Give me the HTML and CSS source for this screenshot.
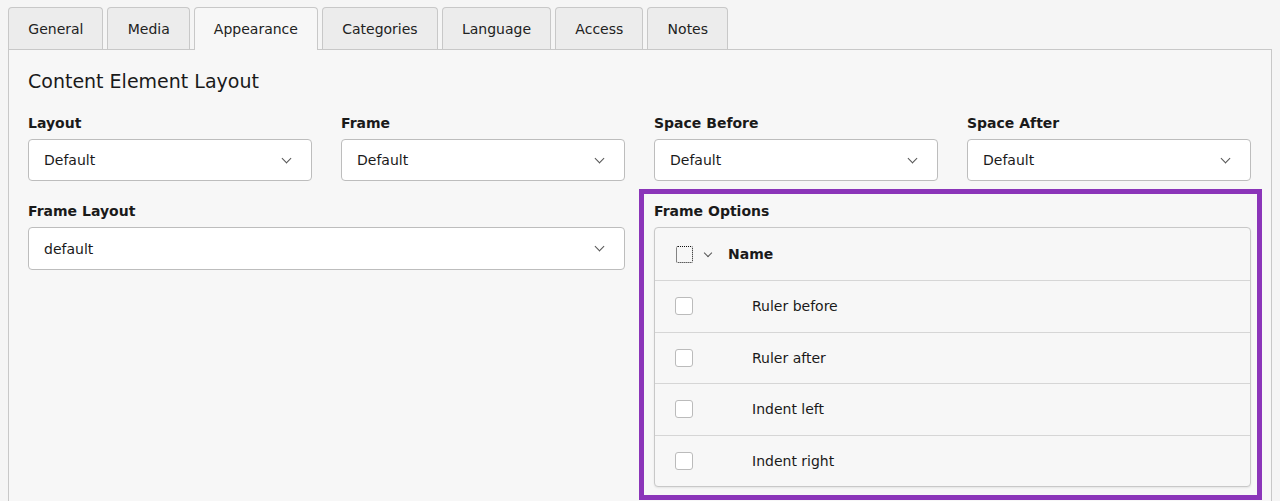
FILE: index.html
```html
<!DOCTYPE html>
<html lang="en">
<head>
  <meta charset="UTF-8">
  <title>Appearance</title>
  <link rel="stylesheet" href="styles.css">
</head>
<body>
  <ul class="tabs">
    <li class="tab">General</li>
    <li class="tab">Media</li>
    <li class="tab active">Appearance</li>
    <li class="tab">Categories</li>
    <li class="tab">Language</li>
    <li class="tab">Access</li>
    <li class="tab">Notes</li>
  </ul>

  <div class="panel">
    <h2 class="section-title">Content Element Layout</h2>

    <div class="fields">
      <div class="field">
        <label class="field-label">Layout</label>
        <div class="select">Default <span class="chevron"></span></div>
      </div>
      <div class="field">
        <label class="field-label">Frame</label>
        <div class="select">Default <span class="chevron"></span></div>
      </div>
      <div class="field">
        <label class="field-label">Space Before</label>
        <div class="select">Default <span class="chevron"></span></div>
      </div>
      <div class="field">
        <label class="field-label">Space After</label>
        <div class="select">Default <span class="chevron"></span></div>
      </div>

      <div class="field wide">
        <label class="field-label">Frame Layout</label>
        <div class="select">default <span class="chevron"></span></div>
      </div>

      <div class="field wide highlighted">
        <label class="field-label">Frame Options</label>
        <div class="options">
          <div class="option-head">
            <span class="check dotted"></span>
            <span class="chevron small"></span>
            <span class="head-name">Name</span>
          </div>
          <div class="option-row"><span class="check"></span><span class="option-name">Ruler before</span></div>
          <div class="option-row"><span class="check"></span><span class="option-name">Ruler after</span></div>
          <div class="option-row"><span class="check"></span><span class="option-name">Indent left</span></div>
          <div class="option-row"><span class="check"></span><span class="option-name">Indent right</span></div>
        </div>
      </div>
    </div>
  </div>
</body>
</html>
```

FILE: styles.css
```css
:root {
  --page-bg: #f5f5f5;
  --panel-bg: #f7f7f7;
  --tab-bg: #ececec;
  --border: #c8c8c8;
  --input-border: #bdbdbd;
  --text: #1a1a1a;
  --highlight: #8b35b9;
}

body {
  margin: 0;
  padding: 7px 8px 0;
  background-color: var(--page-bg);
  color: var(--text);
  font-family: "DejaVu Sans", Verdana, sans-serif;
  font-size: 14px;
  overflow: hidden;
}

.tabs {
  display: flex;
  gap: 4px;
  list-style: none;
  margin: 0;
  padding: 0;
}

.tab {
  height: 42px;
  line-height: 42px;
  padding: 0 19px 0 19.3px;
  background-color: var(--tab-bg);
  border: 1px solid var(--border);
  border-bottom: none;
  border-radius: 4px 4px 0 0;
  box-sizing: border-box;
  font-size: 14px;
  color: #222;
}

.tab.active {
  height: 43px;
  margin-bottom: -1px;
  padding: 0 19px;
  background-color: var(--panel-bg);
  position: relative;
  z-index: 1;
}

.panel {
  background-color: var(--panel-bg);
  border: 1px solid var(--border);
  padding: 19px 20px 40px 19px;
  min-height: 500px;
}

.section-title {
  margin: 0 0 22px;
  font-size: 19px;
  font-weight: normal;
  line-height: 24px;
}

.fields {
  display: grid;
  grid-template-columns: repeat(4, 1fr);
  column-gap: 29px;
  row-gap: 22px;
}

.field.wide {
  grid-column: span 2;
}

.field-label {
  display: block;
  font-weight: bold;
  font-size: 14px;
  line-height: 18px;
  margin: -1px 0 7px;
}

.select {
  display: flex;
  align-items: center;
  justify-content: space-between;
  height: 42px;
  padding: 0 21px 0 15px;
  box-sizing: border-box;
  background: #fff;
  border: 1px solid var(--input-border);
  border-radius: 4px;
  font-size: 14px;
}

.wide .select {
  height: 43px;
}

.chevron {
  width: 6px;
  height: 6px;
  border-right: 1px solid #555;
  border-bottom: 1px solid #555;
  transform: rotate(45deg);
  margin-top: -4px;
}

.chevron.small {
  width: 5px;
  height: 5px;
  margin: -3px 17px 0 12px;
}

.highlighted {
  position: relative;
}

.highlighted::after {
  content: "";
  position: absolute;
  top: -14px;
  left: -15px;
  right: -11px;
  bottom: -13px;
  border: 5px solid var(--highlight);
  pointer-events: none;
}

.options {
  border: 1px solid var(--border);
  border-radius: 4px;
  background: var(--panel-bg);
  box-shadow: 0 1px 2px rgba(0, 0, 0, 0.08);
}

.option-head,
.option-row {
  display: flex;
  align-items: center;
  padding-left: 20px;
}

.option-head {
  height: 52px;
  padding-left: 21px;
}

.option-row {
  height: 50.5px;
  border-top: 1px solid #d6d6d6;
}

.check {
  width: 18px;
  height: 18px;
  box-sizing: border-box;
  background: #fff;
  border: 1px solid #bbb;
  border-radius: 3px;
}

.check.dotted {
  width: 17px;
  height: 17px;
  background: transparent;
  border: 1px dotted #111;
  border-radius: 2px;
}

.head-name {
  font-weight: bold;
}

.option-name {
  margin-left: 59px;
}
```
